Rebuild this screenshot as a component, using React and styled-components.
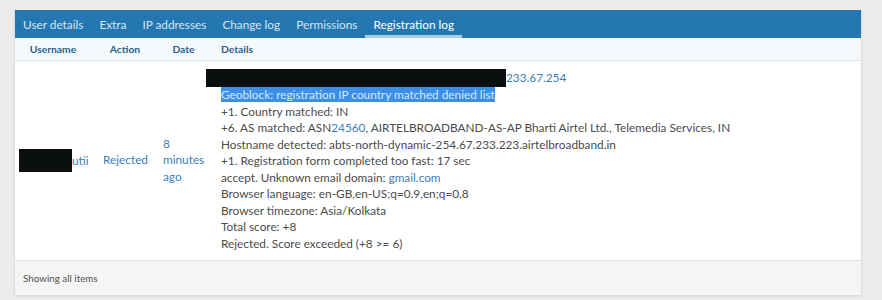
import styled, { createGlobalStyle } from "styled-components";

const GlobalStyle = createGlobalStyle`
  html, body {
    margin: 0;
    background: #ececec;
  }
  body {
    font-family: Lato, "Open Sans", sans-serif;
    color: #4b4b4b;
  }
`;

const Page = styled.div`
  padding: 10px 20px 8px 14px;
`;

const Panel = styled.div`
  background: #fff;
  border: 1px solid #dcdcdc;
  border-top: none;
  box-shadow: 0 1px 2px rgba(0, 0, 0, 0.06);
`;

const TabBar = styled.div`
  display: flex;
  height: 28px;
  background: #2577b1;
`;

const Tab = styled.div`
  display: flex;
  align-items: center;
  padding: 0 8px;
  font-size: 11.8px;
  color: ${(p) => (p.$active ? "#fff" : "#d6e5f2")};
  box-shadow: ${(p) => (p.$active ? "inset 0 -3px 0 #a9cde9" : "none")};
`;

// same column widths for head and body, first column has less left padding
const Grid = styled.div`
  display: grid;
  grid-template-columns: 80px 60px 57px 1fr;

  > *:first-child {
    padding-left: 4px;
  }
  > *:last-child {
    padding-left: 9px;
  }
`;

const HeadRow = styled(Grid)`
  height: 22px;
  background: #f5f9fc;
  border-bottom: 1px solid #dfe5eb;
`;

const HeadCell = styled.div`
  display: flex;
  align-items: center;
  justify-content: ${(p) => (p.$left ? "flex-start" : "center")};
  padding: 0 8px;
  font-size: 10.3px;
  font-weight: 700;
  color: #2a5f8c;
  white-space: nowrap;
`;

const Cell = styled.div`
  display: flex;
  align-items: center;
  padding: 0 8px;
  font-size: 11.8px;
  line-height: 16.5px;
  white-space: ${(p) => (p.$nowrap ? "nowrap" : "normal")};
`;

const Link = styled.span`
  color: #3a80bd;
`;

const Details = styled.div`
  padding: 8px;
  font-size: 11.8px;
  line-height: 16.5px;
`;

const Redact = styled.span`
  display: inline-block;
  background: #0b0f10;
  width: ${(p) => p.$w}px;
  height: ${(p) => p.$h}px;
  margin-left: ${(p) => p.$shift || 0}px;
  vertical-align: ${(p) => p.$va}px;
`;

const Selected = styled.span`
  background: #3d8ee6;
  color: #d6e9fd;
`;

const Footer = styled.div`
  height: 34px;
  display: flex;
  align-items: center;
  padding-left: 8px;
  background: #f5f5f5;
  border-top: 1px solid #e2e2e2;
  font-size: 9.8px;
  color: #505050;
`;

const tabs = ["User details", "Extra", "IP addresses", "Change log", "Permissions", "Registration log"];

export default function App() {
  return (
    <Page>
      <GlobalStyle />
      <Panel>
        <TabBar>
          {tabs.map((t) => (
            <Tab key={t} $active={t === "Registration log"}>
              {t}
            </Tab>
          ))}
        </TabBar>
        <HeadRow>
          <HeadCell>Username</HeadCell>
          <HeadCell>Action</HeadCell>
          <HeadCell>Date</HeadCell>
          <HeadCell $left>Details</HeadCell>
        </HeadRow>
        <Grid>
          <Cell $nowrap>
            <Link>
              <Redact $w={53} $h={23} $va={-7} />
              utii
            </Link>
          </Cell>
          <Cell>
            <Link>Rejected</Link>
          </Cell>
          <Cell>
            <Link>8 minutes ago</Link>
          </Cell>
          <Details>
            <div>
              <Redact $w={300} $h={18} $shift={-15} $va={-5} />
              <Link>233.67.254</Link>
            </div>
            <div>
              <Selected>Geoblock: registration IP country matched denied list</Selected>
            </div>
            <div>+1. Country matched: IN</div>
            <div>
              +6. AS matched: ASN<Link>24560</Link>, AIRTELBROADBAND-AS-AP Bharti Airtel Ltd., Telemedia Services, IN
            </div>
            <div>Hostname detected: abts-north-dynamic-254.67.233.223.airtelbroadband.in</div>
            <div>+1. Registration form completed too fast: 17 sec</div>
            <div>
              accept. Unknown email domain: <Link>gmail.com</Link>
            </div>
            <div>Browser language: en-GB,en-US;q=0.9,en;q=0.8</div>
            <div>Browser timezone: Asia/Kolkata</div>
            <div>Total score: +8</div>
            <div>Rejected. Score exceeded (+8 &gt;= 6)</div>
          </Details>
        </Grid>
        <Footer>Showing all items</Footer>
      </Panel>
    </Page>
  );
}
